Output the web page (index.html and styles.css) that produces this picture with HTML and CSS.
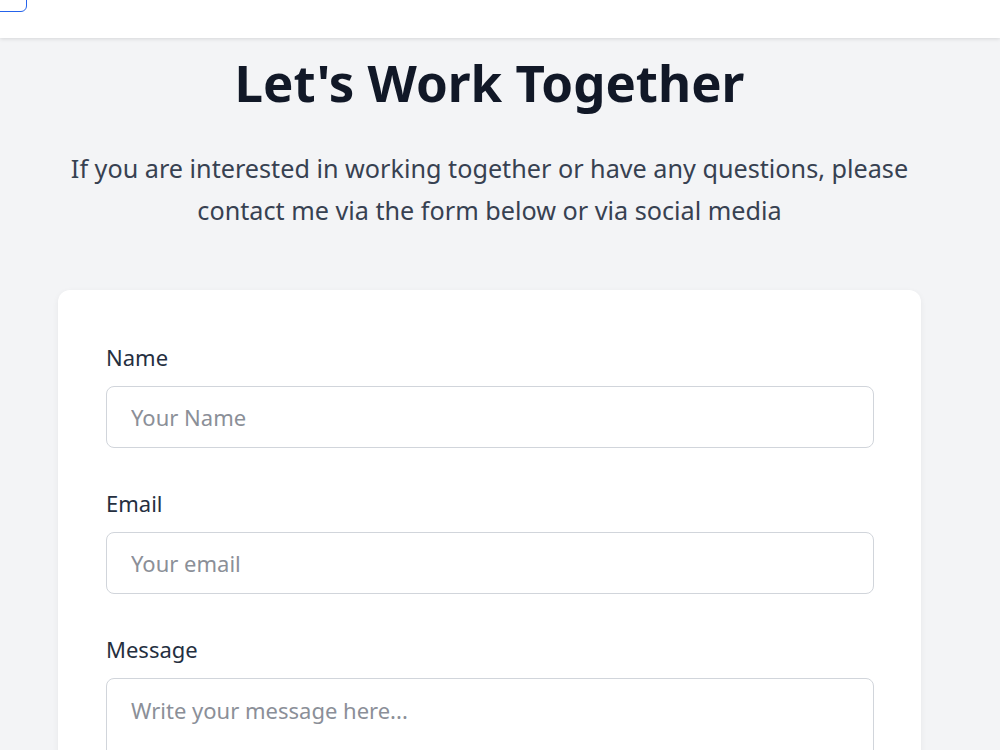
FILE: index.html
```html
<!DOCTYPE html>
<html lang="en">
<head>
<meta charset="utf-8">
<title>Contact</title>
<link rel="stylesheet" href="styles.css">
</head>
<body>
<header class="topbar">
  <span class="nav-btn"></span>
</header>
<main class="page">
  <h1 class="title">Let's Work Together</h1>
  <p class="intro">If you are interested in working together or have any questions, please contact me via the form below or via social media</p>
  <form class="card">
    <div class="field">
      <label class="label" for="name">Name</label>
      <input class="input" id="name" type="text" placeholder="Your Name">
    </div>
    <div class="field">
      <label class="label" for="email">Email</label>
      <input class="input" id="email" type="email" placeholder="Your email">
    </div>
    <div class="field">
      <label class="label" for="msg">Message</label>
      <textarea class="input textarea" id="msg" placeholder="Write your message here..."></textarea>
    </div>
  </form>
</main>
</body>
</html>
```
FILE: styles.css
```css
* { box-sizing: border-box; }
html, body { margin: 0; padding: 0; }
body {
  background: #f3f4f6;
  font-family: "Noto Sans", "Open Sans", sans-serif;
  color: #374151;
  height: 750px;
  overflow: hidden;
}
.topbar {
  height: 38px;
  background: #ffffff;
  box-shadow: 0 1px 4px rgba(0,0,0,0.12);
  position: relative;
  z-index: 2;
}
.nav-btn {
  position: absolute;
  left: -10px;
  top: -20px;
  width: 37px;
  height: 32px;
  border: 1.5px solid #2563eb;
  border-radius: 6px;
}
.page {
  padding: 0 79px 0 58px;
  display: flex;
  flex-direction: column;
  align-items: stretch;
}
.title {
  margin: 12px 0 0;
  text-align: center;
  font-size: 51px;
  line-height: 64px;
  font-weight: 700;
  color: #111827;
}
.intro {
  margin: 33px auto 0;
  max-width: 880px;
  text-align: center;
  font-size: 25.2px;
  line-height: 42px;
  color: #374151;
}
.card {
  margin-top: 59px;
  background: #ffffff;
  border-radius: 12px;
  box-shadow: 0 2px 6px rgba(0,0,0,0.06);
  padding: 53px 47px 48px 48px;
  display: flex;
  flex-direction: column;
  gap: 41px;
}
.field {
  display: flex;
  flex-direction: column;
  gap: 15px;
}
.label {
  font-size: 22px;
  line-height: 28px;
  color: #252f3f;
}
.input {
  height: 62px;
  border: 1px solid #d1d5db;
  border-radius: 8px;
  padding: 0 24px;
  font-family: inherit;
  font-size: 22px;
  color: #374151;
  background: #fff;
  outline: none;
}
.input::placeholder { color: #8b8f98; }
.textarea {
  height: 160px;
  padding-top: 17px;
  resize: none;
  line-height: 28px;
}
```
